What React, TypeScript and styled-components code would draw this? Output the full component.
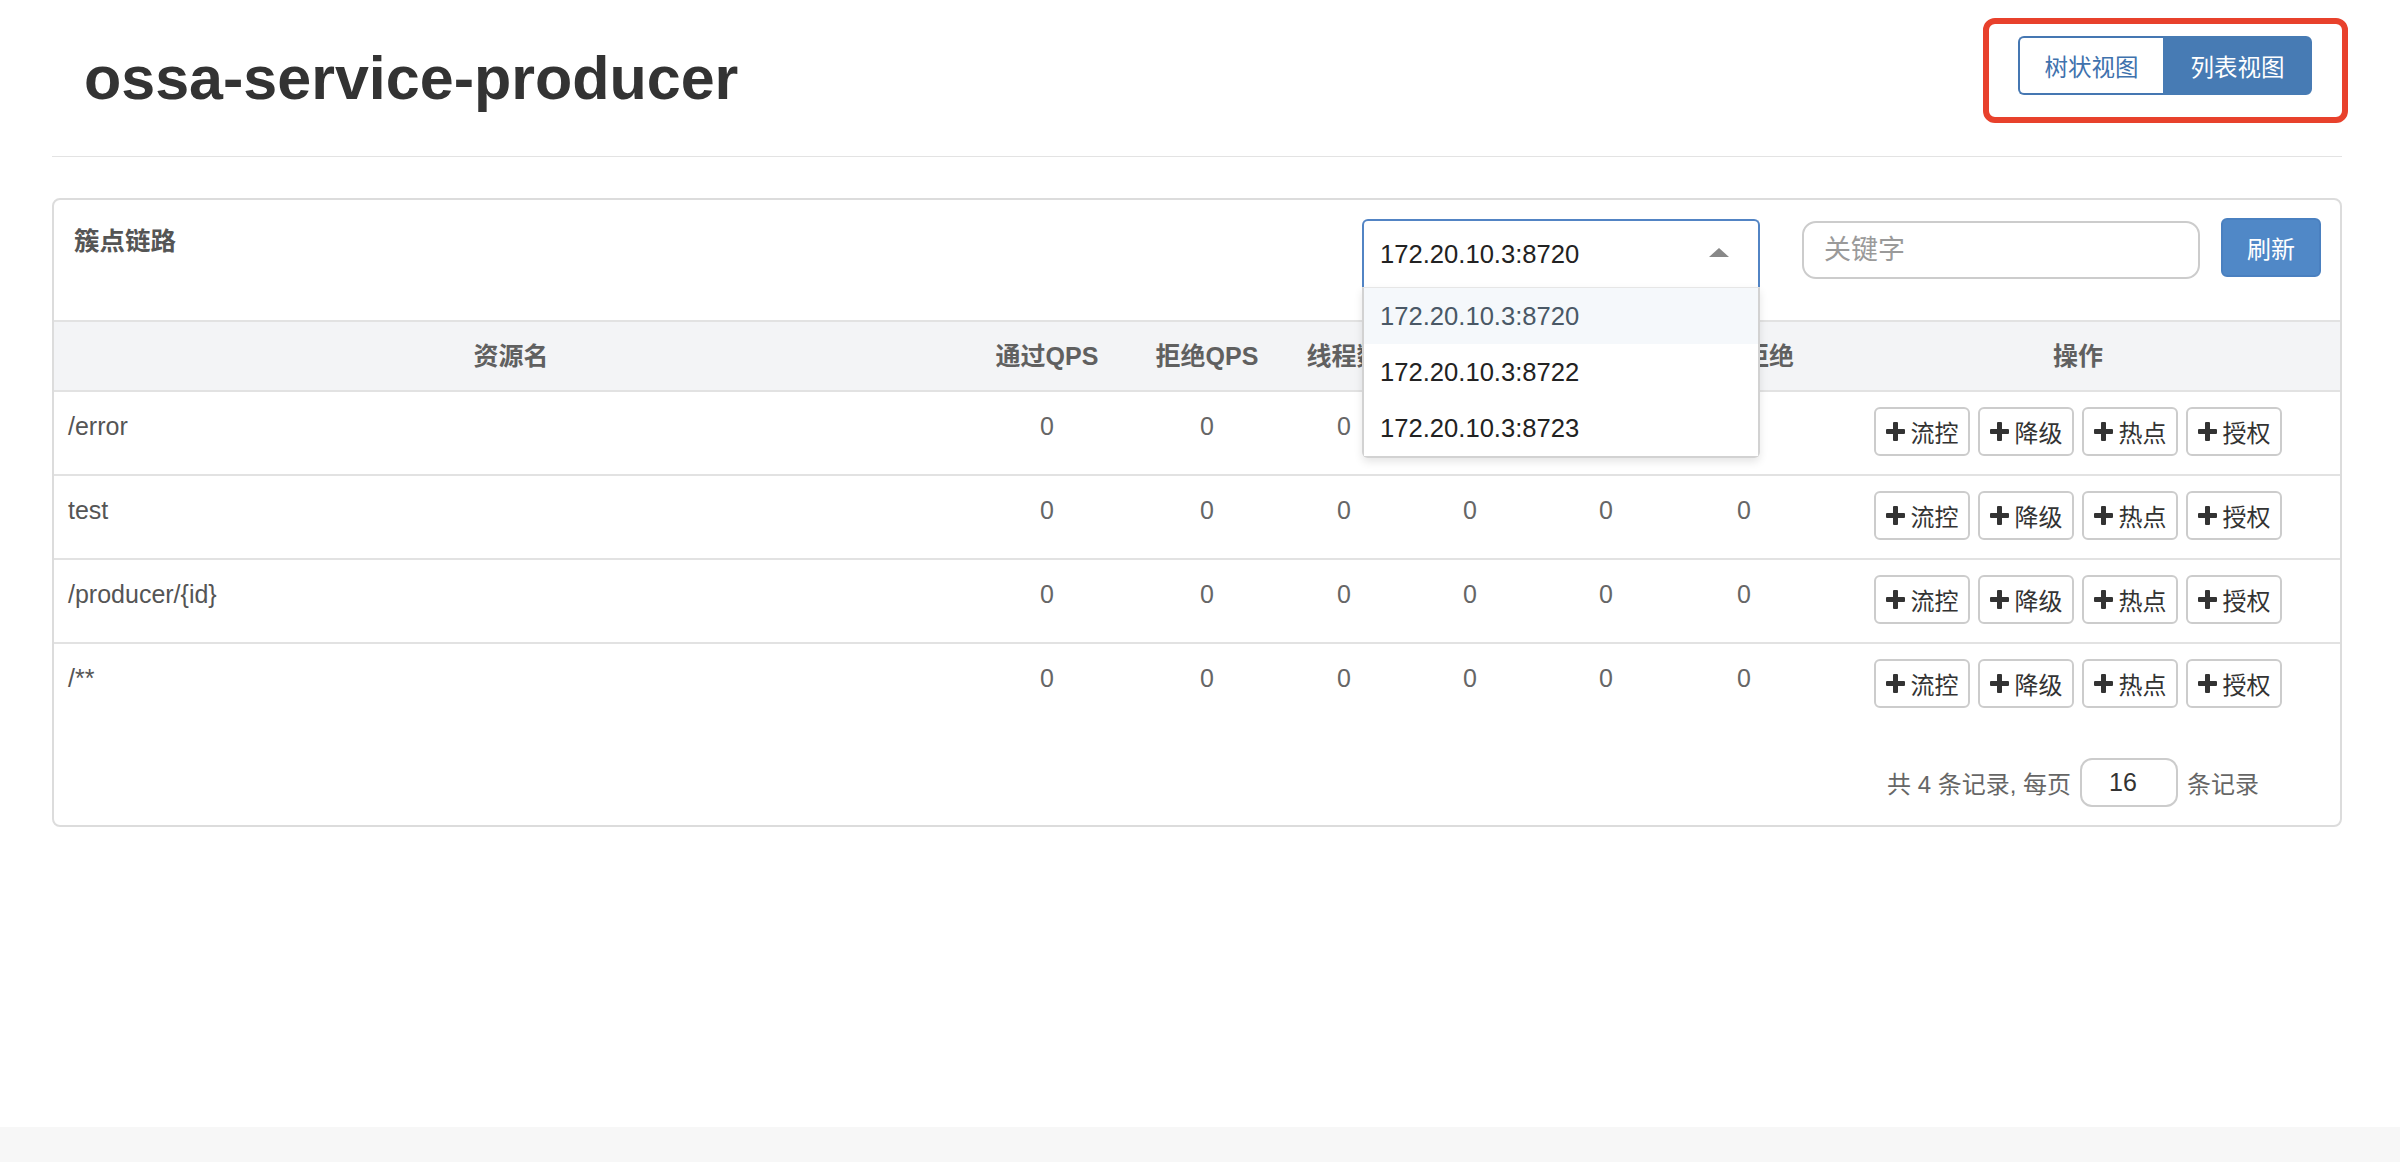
import React from "react";
import styled, { createGlobalStyle } from "styled-components";

const GlobalStyle = createGlobalStyle`
  html, body { margin: 0; padding: 0; background: #fff; }
  body {
    font-family: "Liberation Sans", Arial, "Noto Sans CJK SC", sans-serif;
    color: #333;
  }
  * { box-sizing: border-box; }
`;

const Page = styled.div`
  min-height: 100vh;
  display: flex;
  flex-direction: column;
`;

const Main = styled.main`
  flex: 1;
  padding: 0 58px 0 52px;
`;

const Footer = styled.footer`
  height: 35px;
  background: #f7f7f7;
`;

const PageHeader = styled.header`
  height: 157px;
  display: flex;
  justify-content: space-between;
  align-items: flex-start;
  border-bottom: 1px solid #e3e3e3;
`;

const Title = styled.h1`
  margin: 45px 0 0 32px;
  font-size: 61px;
  line-height: 67px;
  font-weight: 700;
  color: #333;
`;

const Annotation = styled.div`
  margin: 18px -6px 0 0;
  padding: 12px 30px 22px 29px;
  border: 6px solid #e8412c;
  border-radius: 12px;
`;

const ViewToggle = styled.div`
  display: flex;
  height: 59px;
`;

const ToggleButton = styled.button<{ $active?: boolean; $w: number }>`
  width: ${(p) => p.$w}px;
  height: 59px;
  font-family: inherit;
  font-size: 23.5px;
  cursor: pointer;
  border: 2px solid #4577b2;
  background: ${(p) => (p.$active ? "#477bb4" : "#fff")};
  color: ${(p) => (p.$active ? "#fff" : "#3f72ad")};
  border-color: ${(p) => (p.$active ? "#477bb4" : "#4577b2")};
  border-radius: ${(p) => (p.$active ? "0 6px 6px 0" : "6px 0 0 6px")};
  ${(p) => (!p.$active ? "border-right: none;" : "")}
`;

const Panel = styled.section`
  margin-top: 41px;
  border: 2px solid #dcdcdc;
  border-radius: 8px;
  background: #fff;
`;

const PanelHeading = styled.div`
  height: 120px;
  display: flex;
  justify-content: space-between;
  align-items: flex-start;
  padding: 0 19px 0 20px;
`;

const PanelTitle = styled.h3`
  margin: 24px 0 0;
  font-size: 25.5px;
  line-height: 34px;
  font-weight: 700;
  color: #555;
`;

const Controls = styled.div`
  display: flex;
  align-items: flex-start;
  padding-top: 17px;
`;

const SelectWrap = styled.div`
  position: relative;
  width: 398px;
  margin: 2px 42px 0 0;
`;

const SelectBox = styled.div`
  height: 68px;
  border: 2px solid #5284c4;
  border-bottom: none;
  border-radius: 6px 6px 0 0;
  display: flex;
  align-items: center;
  justify-content: space-between;
  padding: 0 29px 0 16px;
  font-size: 25.6px;
  color: #222;
  background: #fff;
`;

const Caret = styled.span`
  width: 0;
  height: 0;
  border-left: 10px solid transparent;
  border-right: 10px solid transparent;
  border-bottom: 9px solid #888;
  margin-top: -3px;
`;

const Menu = styled.ul`
  position: absolute;
  top: 100%;
  left: 0;
  right: 0;
  margin: 0;
  padding: 0;
  list-style: none;
  background: #fff;
  border: 2px solid #d2d2d2;
  border-top: 1px solid #e6e6e6;
  border-radius: 0 0 6px 6px;
  box-shadow: 0 4px 8px rgba(0, 0, 0, 0.1);
  z-index: 10;
`;

const MenuItem = styled.li<{ $active?: boolean }>`
  height: 56px;
  line-height: 56px;
  padding-left: 16px;
  font-size: 25.6px;
  color: ${(p) => (p.$active ? "#4a5866" : "#222")};
  background: ${(p) => (p.$active ? "#f5f8fb" : "#fff")};
`;

const SearchInput = styled.input`
  width: 398px;
  height: 58px;
  margin: 4px 21px 0 0;
  border: 2px solid #cccccc;
  border-radius: 14px;
  padding: 0 20px;
  font-family: inherit;
  font-size: 27px;
  color: #333;
  outline: none;
  &::placeholder { color: #9a9a9a; }
`;

const RefreshButton = styled.button`
  width: 100px;
  height: 59px;
  margin-top: 1px;
  background: #5088c7;
  border: 2px solid #4a80c0;
  border-radius: 6px;
  color: #fff;
  font-family: inherit;
  font-size: 24px;
  cursor: pointer;
`;

const Table = styled.table`
  width: 100%;
  border-collapse: separate;
  border-spacing: 0;
  table-layout: fixed;
`;

const Col = styled.col<{ $w?: number }>`
  ${(p) => (p.$w ? `width: ${p.$w}px;` : "")}
`;

const Th = styled.th`
  border-top: 2px solid #e2e2e2;
  background: #f3f4f6;
  padding: 16px 4px;
  line-height: 36px;
  font-size: 25px;
  font-weight: 700;
  color: #606060;
  text-align: center;
  white-space: nowrap;
`;

const Td = styled.td<{ $align?: "left" | "center" }>`
  border-top: 2px solid #e2e2e2;
  padding: 17px 14px 0;
  vertical-align: top;
  font-size: 25px;
  line-height: 34px;
  color: ${(p) => (p.$align === "center" ? "#666" : "#555")};
  text-align: ${(p) => p.$align ?? "left"};
`;

const OpCell = styled.td`
  border-top: 2px solid #e2e2e2;
  padding: 15px 0 18px;
  vertical-align: top;
`;

const ButtonGroup = styled.div`
  display: flex;
  justify-content: center;
  gap: 8px;
`;

const OpButton = styled.button`
  display: inline-flex;
  align-items: center;
  justify-content: center;
  gap: 6px;
  width: 96px;
  height: 49px;
  padding: 0;
  background: #fff;
  border: 2px solid #cccccc;
  border-radius: 6px;
  color: #333;
  font-family: inherit;
  font-size: 24px;
  cursor: pointer;
`;

const Pager = styled.div`
  display: flex;
  justify-content: flex-end;
  align-items: center;
  gap: 9px;
  padding: 32px 81px 18px 0;
  font-size: 24px;
  color: #666;
`;

const PageSizeInput = styled.input`
  width: 98px;
  height: 49px;
  border: 2px solid #cccccc;
  border-radius: 12px;
  padding: 0 12px 0 0;
  text-align: center;
  font-family: inherit;
  font-size: 25px;
  color: #333;
  outline: none;
`;

const PlusIcon = () => (
  <svg width="19" height="19" viewBox="0 0 19 19" aria-hidden="true">
    <rect x="7" y="0" width="5" height="19" rx="1" fill="#333" />
    <rect x="0" y="7" width="19" height="5" rx="1" fill="#333" />
  </svg>
);

const columns: { label: string; w?: number }[] = [
  { label: "资源名", w: 914 },
  { label: "通过QPS", w: 158 },
  { label: "拒绝QPS", w: 162 },
  { label: "线程数", w: 112 },
  { label: "平均RT", w: 140 },
  { label: "分钟通过", w: 132 },
  { label: "分钟拒绝", w: 144 },
  { label: "操作" },
];

const resources = ["/error", "test", "/producer/{id}", "/**"];
const actions = ["流控", "降级", "热点", "授权"];
const machines = ["172.20.10.3:8720", "172.20.10.3:8722", "172.20.10.3:8723"];

export default function App() {
  return (
    <Page>
      <GlobalStyle />
      <Main>
        <PageHeader>
          <Title>ossa-service-producer</Title>
          <Annotation>
            <ViewToggle>
              <ToggleButton $w={145}>树状视图</ToggleButton>
              <ToggleButton $w={149} $active>
                列表视图
              </ToggleButton>
            </ViewToggle>
          </Annotation>
        </PageHeader>

        <Panel>
          <PanelHeading>
            <PanelTitle>簇点链路</PanelTitle>
            <Controls>
              <SelectWrap>
                <SelectBox>
                  <span>{machines[0]}</span>
                  <Caret />
                </SelectBox>
                <Menu>
                  {machines.map((m, i) => (
                    <MenuItem key={m} $active={i === 0}>
                      {m}
                    </MenuItem>
                  ))}
                </Menu>
              </SelectWrap>
              <SearchInput placeholder="关键字" />
              <RefreshButton>刷新</RefreshButton>
            </Controls>
          </PanelHeading>

          <Table>
            <colgroup>
              {columns.map((c) => (
                <Col key={c.label} $w={c.w} />
              ))}
            </colgroup>
            <thead>
              <tr>
                {columns.map((c) => (
                  <Th key={c.label}>{c.label}</Th>
                ))}
              </tr>
            </thead>
            <tbody>
              {resources.map((r) => (
                <tr key={r}>
                  <Td>{r}</Td>
                  {[0, 1, 2, 3, 4, 5].map((n) => (
                    <Td key={n} $align="center">
                      0
                    </Td>
                  ))}
                  <OpCell>
                    <ButtonGroup>
                      {actions.map((a) => (
                        <OpButton key={a}>
                          <PlusIcon />
                          <span>{a}</span>
                        </OpButton>
                      ))}
                    </ButtonGroup>
                  </OpCell>
                </tr>
              ))}
            </tbody>
          </Table>

          <Pager>
            <span>共 4 条记录, 每页</span>
            <PageSizeInput defaultValue="16" />
            <span>条记录</span>
          </Pager>
        </Panel>
      </Main>
      <Footer />
    </Page>
  );
}
